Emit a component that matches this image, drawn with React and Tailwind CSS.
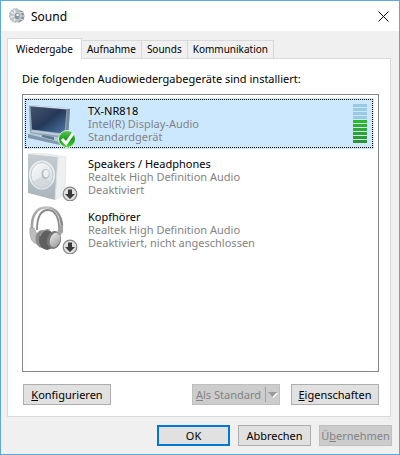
import React, { useState } from 'react';

const tabs = ['Wiedergabe', 'Aufnahme', 'Sounds', 'Kommunikation'];

const devices = [
  { name: 'TX-NR818', driver: 'Intel(R) Display-Audio', status: 'Standardgerät', icon: TvIcon, meter: true },
  { name: 'Speakers / Headphones', driver: 'Realtek High Definition Audio', status: 'Deaktiviert', icon: SpeakerIcon },
  { name: 'Kopfhörer', driver: 'Realtek High Definition Audio', status: 'Deaktiviert, nicht angeschlossen', icon: HeadphonesIcon },
];

// top to bottom, the last six are lit
const meterBars = [
  'bg-[#9ac9e3]', 'bg-[#9ac9e3]', 'bg-[#9ac9e3]', 'bg-[#9ac9e3]', 'bg-[#2eb82e]',
  'bg-[#2fb034]', 'bg-[#2fa935]', 'bg-[#2fa235]', 'bg-[#2f9b36]', 'bg-[#2f9438]',
];

function SoundIcon() {
  return (
    <svg viewBox="0 0 16 16" className="size-4" aria-hidden="true">
      <path d="M9 2l5 1 1.500 5-1 4-5 3z" fill="#8d949c" />
      <ellipse cx="6.500" cy="7.500" rx="6" ry="6.800" fill="#bcc3ca" stroke="#a3abb3" strokeDasharray="2 1" />
      <path d="M2 4l5 3M1.500 9l5-1M5 13l2-4M5 1.500l2 5" stroke="#e9edf0" strokeWidth="1.400" />
      <path d="M11 5l3-1M11 8h4M11 11l3 1" stroke="#dfe3e8" />
      <ellipse cx="8" cy="8" rx="2.500" ry="3" fill="#87909a" />
      <circle cx="8.500" cy="7" r="1.300" fill="#f2f4f6" />
    </svg>
  );
}

function TvIcon() {
  return (
    <svg viewBox="0 0 52 48" className="h-12 w-13" aria-hidden="true">
      <defs>
        <linearGradient id="screen" x1="0" y1="0" x2="1" y2="1">
          <stop offset="0" stopColor="#44546b" />
          <stop offset="0.500" stopColor="#26395a" />
          <stop offset="1" stopColor="#4f7aa8" />
        </linearGradient>
        <linearGradient id="check" x1="0" y1="0" x2="0" y2="1">
          <stop offset="0" stopColor="#63c75c" />
          <stop offset="0.5" stopColor="#1c9e1c" />
          <stop offset="1" stopColor="#45cc35" />
        </linearGradient>
      </defs>
      <path d="M0 34l8-1 26 7 2 3-4 2L0 38z" fill="#8199ab" />
      <path d="M0 34l8-1 26 7-3 2z" fill="#b7cad7" />
      <path d="M14 34l12 3v3l-12-3z" fill="#5f7a90" />
      <path d="M1 5l38 3 3 1-2 29-2 1L2 33z" fill="#8ea3b3" />
      <path d="M1 5l38 3 3 1-3 0.500L2 6z" fill="#d3e0e9" />
      <path d="M39 9l3 0-2 29-2 1z" fill="#6f8799" />
      <path d="M2.500 6.500l36 3-2 24L4 29.500z" fill="url(#screen)" />
      <path d="M4 30l33 4.500-0.500 2L3 32z" fill="#bccdd9" />
      <circle cx="39" cy="39" r="8.500" fill="url(#check)" stroke="#dcefdc" />
      <path d="M34 39l4 4.500 7-10" fill="none" stroke="#fff" strokeWidth="3" />
    </svg>
  );
}

function DisabledBadge() {
  return (
    <g>
      <circle cx="42" cy="41" r="6.800" fill="#e0e0e0" stroke="#858585" strokeWidth="1.200" />
      <path d="M40 36.500h4V41h3l-5 5-5-5h3z" fill="#3a3a3a" />
    </g>
  );
}

function SpeakerIcon() {
  return (
    <svg viewBox="0 0 52 48" className="h-12 w-13" aria-hidden="true">
      <defs>
        <linearGradient id="front" x1="0" y1="0" x2="0" y2="1">
          <stop offset="0" stopColor="#c6ccd1" />
          <stop offset="1" stopColor="#a9b4bd" />
        </linearGradient>
        <linearGradient id="cone" x1="0" y1="0" x2="1" y2="1">
          <stop offset="0" stopColor="#fafbfc" />
          <stop offset="1" stopColor="#d5dade" />
        </linearGradient>
      </defs>
      <path d="M1 1l12-1 25 4-1 38-11 5z" fill="#edeff1" stroke="#dcdfe2" strokeWidth="0.600" />
      <path d="M0 1l30 3-3 43L0 40z" fill="url(#front)" />
      <path d="M30 4l-3 43" stroke="#dde2e6" />
      <ellipse cx="14" cy="22" rx="13" ry="14.500" fill="#eceff1" />
      <ellipse cx="14" cy="22" rx="11" ry="12.500" fill="url(#cone)" stroke="#b5bec5" strokeWidth="0.800" />
      <path d="M4 29l11-6 9 7a11 11 0 0 1-20-1z" fill="#cbd1d6" opacity="0.600" />
      <ellipse cx="17.500" cy="21" rx="4" ry="5" fill="#b3bbc1" />
      <ellipse cx="18" cy="20.500" rx="2.800" ry="3.800" fill="#edf0f2" />
      <DisabledBadge />
    </svg>
  );
}

function HeadphonesIcon() {
  return (
    <svg viewBox="0 0 52 48" className="h-12 w-13" aria-hidden="true">
      <defs>
        <linearGradient id="band" x1="0" y1="0" x2="1" y2="0">
          <stop offset="0" stopColor="#a0a0a0" />
          <stop offset="0.500" stopColor="#c4c4c4" />
          <stop offset="1" stopColor="#858585" />
        </linearGradient>
        <linearGradient id="cup" x1="0" y1="0" x2="1" y2="1">
          <stop offset="0" stopColor="#ededed" />
          <stop offset="1" stopColor="#969696" />
        </linearGradient>
      </defs>
      <path d="M9 24C9 11 13 4 20 4s12 8 11 22" fill="none" stroke="#8a8a8a" strokeWidth="1.800" />
      <path d="M4 24C3 9 9 1.500 18 1.500S33 8 34 20" fill="none" stroke="url(#band)" strokeWidth="2.600" />
      <path d="M2 22h4l3 6v10c-5-1-8-7-7-16z" fill="#bdbdbd" stroke="#9b9b9b" strokeWidth="0.600" />
      <ellipse cx="14" cy="33" rx="6.500" ry="9" fill="#8a8a8a" />
      <ellipse cx="19" cy="34" rx="8" ry="10" fill="#5f5f5f" />
      <path d="M12 30c2-5 6-7 10-6" fill="none" stroke="#999" strokeWidth="1.200" />
      <ellipse cx="26" cy="34" rx="7" ry="9" transform="rotate(15 26 34)" fill="#777" />
      <ellipse cx="27" cy="34" rx="5" ry="7.500" transform="rotate(20 27 34)" fill="url(#cup)" />
      <path d="M31 19h4v7l-3 4-3-2z" fill="#a3a3a3" />
      <DisabledBadge />
    </svg>
  );
}

function PushButton({ border = 'border border-[#adadad]', className = '', children, ...props }) {
  return (
    <button
      type="button"
      className={`h-[21px] bg-[#e1e1e1] whitespace-nowrap disabled:border-[#bfbfbf] disabled:bg-[#ccc] disabled:text-[#838383] ${border} ${className}`}
      {...props}
    >
      {children}
    </button>
  );
}

export default function App() {
  const [tab, setTab] = useState('Wiedergabe');
  const [selected, setSelected] = useState('TX-NR818');

  return (
    <div className="flex min-h-screen flex-col border border-[#5ba9d4] bg-[#f0f0f0] font-['Noto_Sans','Open_Sans',sans-serif] text-[11px] leading-[13px] text-black">
      {/* Title bar */}
      <header className="flex h-[30px] items-center bg-white px-2">
        <SoundIcon />
        <h1 className="ml-[6px] flex-1 text-[12px]">Sound</h1>
        <button type="button" aria-label="Schließen" className="flex size-4 items-center justify-center">
          <svg viewBox="0 0 11 11" className="size-[11px]" aria-hidden="true">
            <path d="M0.5 0.5l10 10M10.5 0.5l-10 10" stroke="#000" />
          </svg>
        </button>
      </header>

      <main className="flex flex-1 flex-col pt-[7px] pr-[7px] pb-2 pl-[6px]">
        {/* Tabs */}
        <div role="tablist" className="flex items-end text-[10px]">
          {tabs.map((t) => (
            <button
              key={t}
              type="button"
              role="tab"
              aria-selected={t === tab}
              onClick={() => setTab(t)}
              className={
                t === tab
                  ? 'z-10 -mb-px h-[21px] border border-b-0 border-[#d9d9d9] bg-white px-2'
                  : 'h-[18px] border border-b-0 border-l-0 border-[#d9d9d9] px-[5px]'
              }
            >
              {t}
            </button>
          ))}
        </div>

        <section role="tabpanel" className="mr-px flex flex-1 flex-col border border-[#d9d9d9] bg-white pt-[13px] pr-[11px] pb-[11px] pl-[14px]">
          <p id="device-label">Die folgenden Audiowiedergabegeräte sind installiert:</p>

          {/* Devices */}
          <ul role="listbox" aria-labelledby="device-label" className="mt-[9px] flex-1 border border-[#828790] py-[3px] pr-1 pl-px">
            {devices.map(({ name, driver, status, icon: Icon, meter }) => (
              <li
                key={name}
                role="option"
                aria-selected={name === selected}
                onClick={() => setSelected(name)}
                className={name === selected ? 'mb-[2px] bg-[#cce8ff] p-px' : 'mb-[2px] p-px'}
              >
                <div className={`flex h-[49px] items-center border border-dotted pr-[5px] pl-[2px] ${name === selected ? 'border-black' : 'border-transparent'}`}>
                  <Icon />
                  <div className="ml-2 flex-1">
                    <p>{name}</p>
                    <p className="text-[#838383]">{driver}</p>
                    <p className="text-[#838383]">{status}</p>
                  </div>
                  {meter && (
                    <div className="flex flex-col gap-px">
                      {meterBars.map((bar, i) => (
                        <span key={i} className={`h-[3px] w-[14px] ${bar}`} />
                      ))}
                    </div>
                  )}
                </div>
              </li>
            ))}
          </ul>

          <div className="mt-3 flex justify-between pl-px">
            <PushButton className="w-[88px]"><u>K</u>onfigurieren</PushButton>
            <div className="flex gap-[11px]">
              <PushButton className="flex w-[88px] items-center justify-between pr-px pl-[3px]" disabled>
                <span><u>A</u>ls Standard</span>
                <span className="flex h-[15px] items-center border-l border-[#a0a0a0] pl-[2px]">
                  <svg viewBox="0 0 10 6" className="h-[6px] w-[10px]" aria-hidden="true">
                    <path d="M1 1h9L5.500 6z" fill="#fff" />
                    <path d="M0 0h9L4.500 5z" fill="#999" />
                  </svg>
                </span>
              </PushButton>
              <PushButton className="w-[88px]"><u>E</u>igenschaften</PushButton>
            </div>
          </div>
        </section>

        <footer className="mt-2 flex justify-end gap-2">
          <PushButton className="w-[73px]" border="border-2 border-[#0078d7]">OK</PushButton>
          <PushButton className="w-[73px]">Abbrechen</PushButton>
          <PushButton className="w-[73px]" disabled>Ü<u>b</u>ernehmen</PushButton>
        </footer>
      </main>
    </div>
  );
}
